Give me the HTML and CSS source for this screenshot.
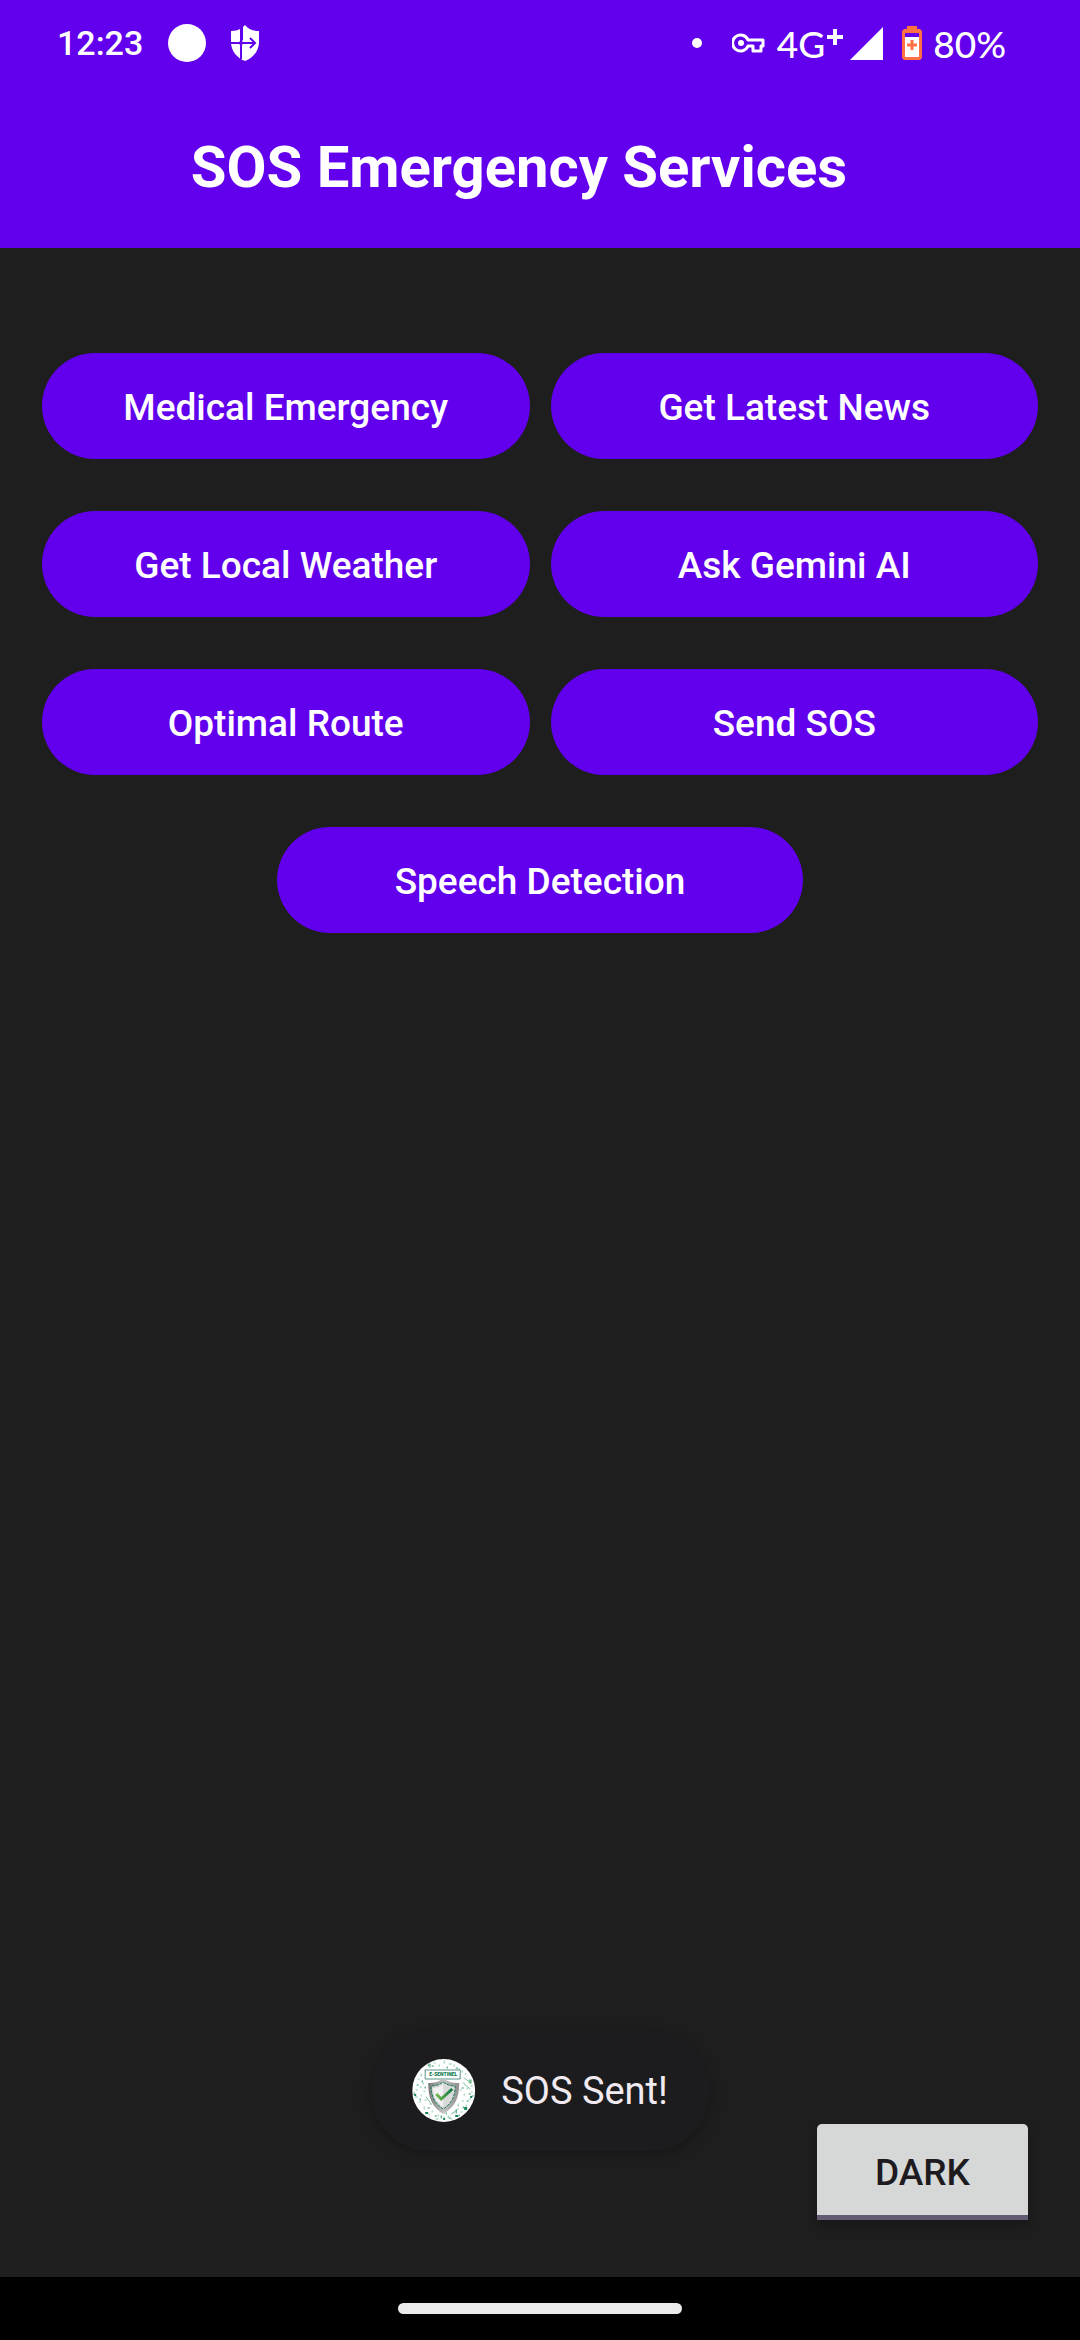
FILE: index.html
```html
<!DOCTYPE html>
<html lang="en">
<head>
<meta charset="utf-8">
<meta name="viewport" content="width=device-width, initial-scale=1">
<title>SOS Emergency Services</title>
<link rel="stylesheet" href="styles.css">
</head>
<body>
<header class="header">
  <div class="status">
    <div class="status-left">
      <span class="time">12:23</span>
      <span class="disc"></span>
      <svg class="shield" viewBox="0 0 28 36" width="28" height="36" aria-hidden="true">
        <path fill="#fff" d="M14 0C17 4 22 6 28 6V17C28 26 22 33 14 36C6 33 0 26 0 17V6C4 6 7 5 9 4V15L10 17L12 15V2Z"/>
        <path fill="none" stroke="#6200ee" stroke-width="2" d="M0 18H24M19 13L24 18L19 23M10 3V34"/>
        <circle cx="10" cy="18" r="2" fill="#6200ee"/>
      </svg>
    </div>
    <div class="status-right">
      <span class="dot"></span>
      <svg class="key" viewBox="0 0 33 20" width="33" height="20" aria-hidden="true">
        <path fill="none" stroke="#fff" stroke-width="3" stroke-linejoin="round" d="M16 7H31V13H29V18H21V13H16A8 8 0 1 1 16 7Z"/>
        <circle cx="9" cy="10" r="3" fill="#fff"/>
      </svg>
      <span class="network">4G<svg class="plus" viewBox="0 0 16 16" width="16" height="16" aria-hidden="true"><path stroke="#fff" stroke-width="4" d="M0 8H16M8 0V16"/></svg></span>
      <svg class="signal" viewBox="0 0 33 33" width="33" height="33" aria-hidden="true"><path fill="#fff" d="M0 33L33 0V33Z"/></svg>
      <svg class="battery" viewBox="0 0 20 34" width="20" height="34" aria-hidden="true">
        <path fill="#ff7043" d="M5 0H15V3H18L20 5V32L18 34H2L0 32V5L2 3H5Z"/>
        <path fill="#6200ee" d="M3 7H17V11H3Z"/>
        <path fill="#fff" d="M3 11H17V31H3Z"/>
        <path stroke="#ff7043" stroke-width="3" d="M5 19H15M10 14V24"/>
      </svg>
      <span class="percent">80%</span>
    </div>
  </div>
  <div class="toolbar"><h1 class="title">SOS Emergency Services</h1></div>
</header>

<main class="main">
  <div class="actions">
    <button class="action" type="button">Medical Emergency</button>
    <button class="action" type="button">Get Latest News</button>
    <button class="action" type="button">Get Local Weather</button>
    <button class="action" type="button">Ask Gemini AI</button>
    <button class="action" type="button">Optimal Route</button>
    <button class="action" type="button">Send SOS</button>
    <button class="action action-wide" type="button">Speech Detection</button>
  </div>
  <button class="theme" type="button">DARK</button>
</main>

<footer class="nav"><span class="handle"></span></footer>

<div class="toast" role="status">
  <svg class="logo" viewBox="0 0 63 63" width="63" height="63" aria-hidden="true">
    <defs>
      <linearGradient id="steel" x1="0" x2="1"><stop offset="0" stop-color="#777"/><stop offset=".5" stop-color="#c4c4c4"/><stop offset="1" stop-color="#8e8e8e"/></linearGradient>
      <linearGradient id="tick" x1="0" x2="1"><stop offset="0" stop-color="#7cb94c"/><stop offset="1" stop-color="#0b7a45"/></linearGradient>
      <clipPath id="round"><circle cx="31" cy="31" r="31"/></clipPath>
    </defs>
    <circle cx="31.500" cy="31.500" r="31.500" fill="#fff"/>
    <g clip-path="url(#round)" fill="none" stroke-linecap="square">
      <path stroke="#86c8a3" stroke-width="1" d="M22 4h1M27 6v1M32 2v2M37 5h2M42 6v1M17 8h1M13 11v1M46 10h1M50 12v1M53 15h1M9 15v2M6 20h1M11 24v1M4 31h1M8 28h1M12 32v1M3 38h2M9 36v1M13 41h1M7 43h1M12 48v2M18 45h1M20 52v1M26 56v1M31 58h1M36 57v1M41 54h1M46 45v2M50 42h1M54 46v1M57 40h1M52 35v1M59 33h1M55 29v1M51 24h1M59 27h1M48 31h1M49 53h1M24 60h2M39 60h1M17 55v1M52 19l4 3M52 25l6 5M14 38l5 7M46 50l-7 5"/>
      <path stroke="#2a946b" stroke-width="1" d="M20 7h1M35 8v1M44 9h1M10 22v1M5 26h1M2 34v1M8 40v1M16 49h1M23 57h1M34 54v1M37 59h1M47 56v1M51 48v1M57 35h1M60 37h1M55 42h1M15 59h2M29 57v2M44 51v3M13 28v1M50 29h1"/>
      <path stroke="#7cbd98" stroke-width="3" d="M58 22v1M17 6v0"/>
      <path stroke="#178459" stroke-width="2" d="M14 54h1M53 49h1v1h-1M3 36v0M59 38v0M44 57h1M32 60v0"/>
    </g>
    <path fill="#fff" stroke="#5c9388" d="M13 11H48V20H13Z"/>
    <text class="logo-name" x="31" y="17" text-anchor="middle">E-SENTINEL</text>
    <path fill="url(#steel)" d="M31 19C35 23 41 24 47 24C47 39 43 48 31 55C20 48 16 39 16 24C22 24 27 23 31 19Z"/>
    <path fill="#d9d9d9" stroke="#137c55" stroke-dasharray="3 1" d="M31 23C35 26 39 27 43 27C43 38 39 45 31 50C23 45 19 38 19 27C23 27 27 26 31 23Z"/>
    <path fill="#f1f1f1" d="M31 25V48C24 43 21 37 21 29C25 29 28 28 31 25Z"/>
    <path fill="none" stroke="url(#tick)" stroke-width="3" d="M24 35L29 40L40 30"/>
  </svg>
  <span class="toast-text">SOS Sent!</span>
</div>
</body>
</html>
```
FILE: styles.css
```css
* {
  box-sizing: border-box;
}

body {
  position: relative;
  display: flex;
  flex-direction: column;
  min-height: 100vh;
  margin: 0;
  background: #1e1e1e;
  color: #fff;
  font-family: Roboto, sans-serif;
  font-size: 37px;
}

button {
  border: 0;
  font: inherit;
  font-weight: 500;
}

svg {
  display: block;
  flex: none;
}

.header {
  background: #6200ee;
}

.status {
  display: flex;
  justify-content: space-between;
  height: 86px;
  padding: 0 74px 0 57px;
}

.status-left,
.status-right {
  display: flex;
  align-items: center;
}

.status-right {
  font-family: Lato, Roboto, sans-serif;
  font-weight: 500;
}

.time {
  font-size: 34px;
  font-weight: 500;
}

.disc {
  width: 38px;
  height: 38px;
  margin: 0 25px;
  border-radius: 50%;
  background: #fff;
}

.dot {
  width: 10px;
  height: 10px;
  margin-right: 30px;
  border-radius: 50%;
  background: #fff;
}

.key {
  margin-right: 12px;
}

.network {
  display: flex;
  gap: 2px;
  margin-right: 7px;
}

.plus {
  margin-top: 8px;
}

.signal {
  margin-right: 19px;
}

.battery {
  margin-right: 11px;
}

.toolbar {
  display: flex;
  align-items: center;
  justify-content: center;
  height: 162px;
  padding-right: 42px;
}

.title {
  margin: 0;
  font-size: 58px;
  font-weight: 700;
}

.main {
  display: flex;
  flex: 1;
  flex-direction: column;
  padding: 105px 42px 57px;
}

.actions {
  display: grid;
  grid-template-columns: 1fr 1fr;
  gap: 52px 21px;
}

.action {
  height: 106px;
  padding-top: 3px;
  border-radius: 53px;
  background: #6200ee;
  color: #fff;
}

.action-wide {
  grid-column: 1 / -1;
  justify-self: center;
  width: 526px;
}

.theme {
  align-self: flex-end;
  width: 211px;
  height: 96px;
  margin-top: auto;
  margin-right: 10px;
  padding-top: 7px;
  border-bottom: 5px solid #625b71;
  border-radius: 5px 5px 0 0;
  background: #d6d8d7;
  color: #1d1b20;
  box-shadow: 0 5px 8px rgba(0, 0, 0, 0.25);
}

.nav {
  display: flex;
  align-items: center;
  justify-content: center;
  height: 63px;
  background: #000;
}

.handle {
  width: 284px;
  height: 11px;
  border-radius: 6px;
  background: #ebebeb;
}

.toast {
  position: absolute;
  bottom: 189px;
  left: 50%;
  display: flex;
  align-items: center;
  gap: 26px;
  height: 121px;
  padding: 0 42px;
  border-radius: 61px;
  background: #1c1b1d;
  box-shadow: 0 4px 12px rgba(0, 0, 0, 0.25);
  color: #f1ebf1;
  font-size: 38px;
  transform: translateX(-50%);
  white-space: nowrap;
}

.logo-name {
  fill: #0c7a52;
  font-size: 5px;
  font-weight: 900;
}
```
